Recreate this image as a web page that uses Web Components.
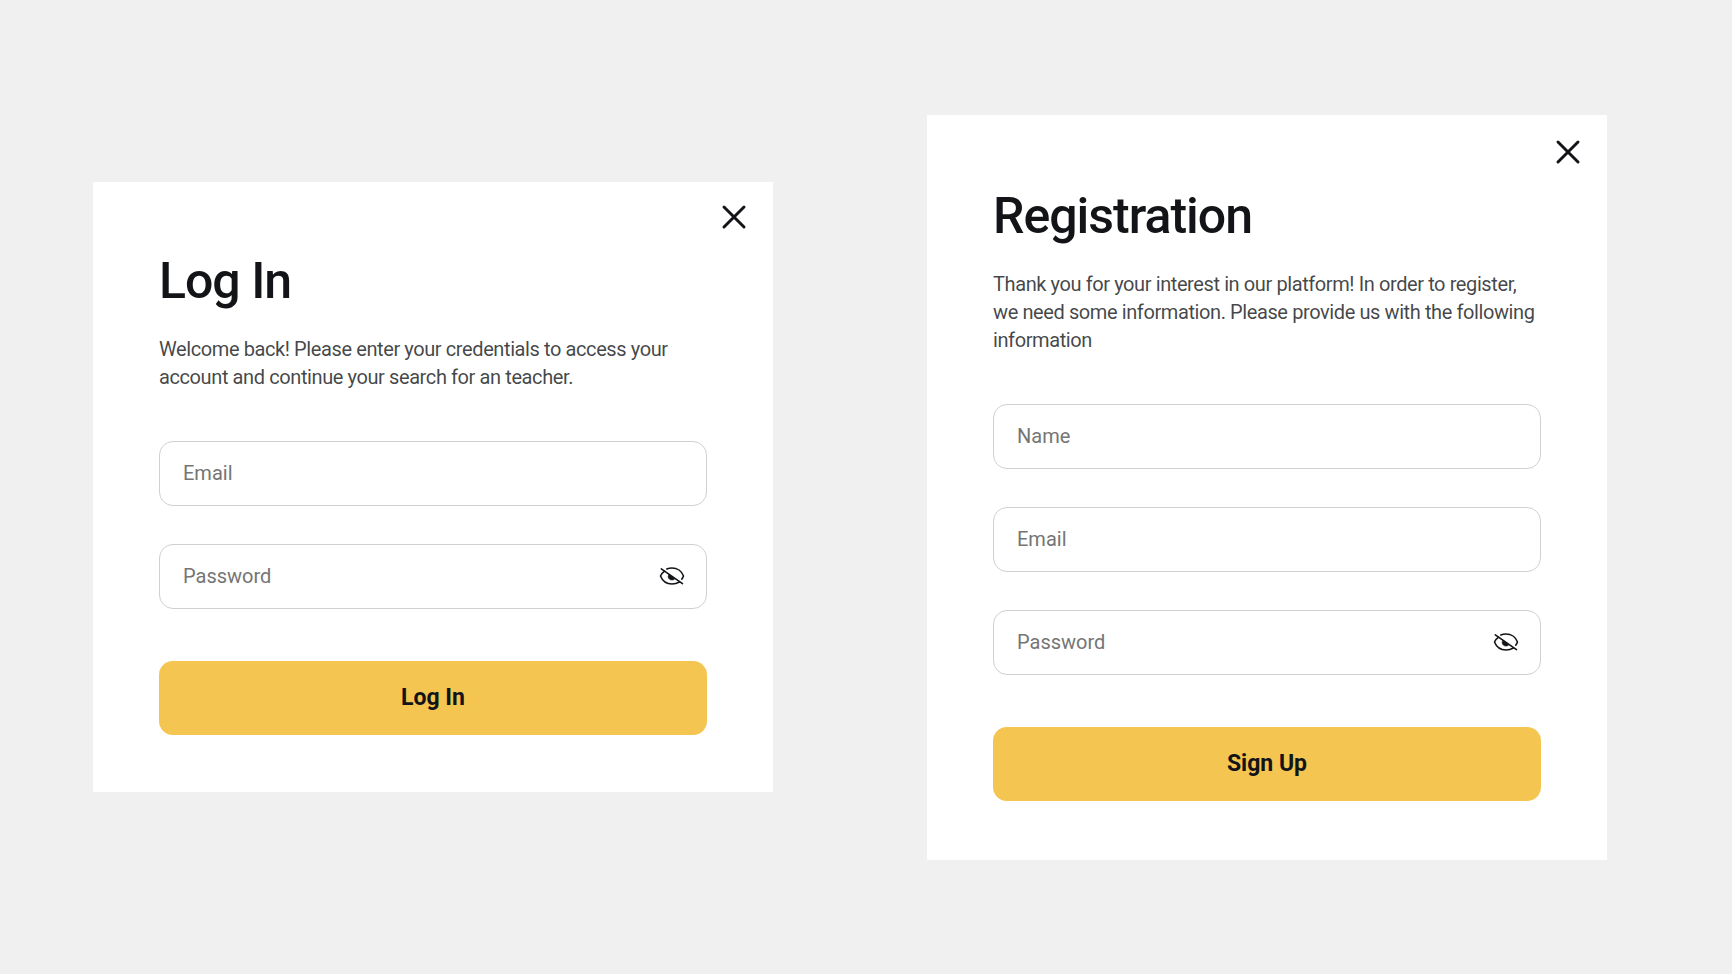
<!DOCTYPE html>
<html lang="en">
<head>
<meta charset="utf-8">
<title>Log In and Registration</title>
<style>
html,body{margin:0;min-height:100%}
body{background:#f0f0f0;font-family:Roboto,sans-serif;color:#121417}
</style>
</head>
<body>
<auth-board>
  <auth-dialog heading="Log In" action="Log In">
    <span slot="intro">Welcome back! Please enter your credentials to access your account and continue your search for an teacher.</span>
    <text-field label="Email" type="email"></text-field>
    <text-field label="Password" type="password"></text-field>
  </auth-dialog>
  <auth-dialog heading="Registration" action="Sign Up" class="tall">
    <span slot="intro">Thank you for your interest in our platform! In order to register, we need some information. Please provide us with the following information</span>
    <text-field label="Name" type="text"></text-field>
    <text-field label="Email" type="email"></text-field>
    <text-field label="Password" type="password"></text-field>
  </auth-dialog>
</auth-board>
<script>
customElements.define('auth-board', class extends HTMLElement {
  constructor() {
    super();
    this.attachShadow({mode: 'open'}).innerHTML = `
      <style>
        :host{display:block}
        main{box-sizing:border-box;min-height:100vh;display:grid;grid-template-columns:repeat(auto-fit,minmax(min(100%,600px),1fr));gap:154px;padding:48px 125px 48px 93px;align-items:center}
      </style>
      <main><slot></slot></main>`;
  }
});
customElements.define('text-field', class extends HTMLElement {
  constructor() {
    super();
    this.attachShadow({mode: 'open'});
  }
  connectedCallback() {
    const label = this.getAttribute('label');
    const type = this.getAttribute('type');
    this.shadowRoot.innerHTML = `
      <style>
        :host{display:block}
        .box{box-sizing:border-box;height:65px;display:flex;align-items:center;border:1px solid #d0d0d1;border-radius:14px;padding:0 21px 1px 23px;background:#fff}
        input{flex:1;min-width:0;border:0;outline:0;padding:0;background:none;font:400 20px/28px Roboto,sans-serif;color:#121417}
        input::placeholder{color:#757575;opacity:1}
        button{border:0;padding:0;background:none;display:flex;cursor:pointer}
      </style>
      <div class="box">
        <input type="${type}" placeholder="${label}" aria-label="${label}">
        ${type === 'password' ? `<button type="button" aria-label="Show password">
          <svg width="26" height="26" viewBox="0 0 26 26" fill="none" stroke="#121417" stroke-width="1.6" stroke-linecap="round" stroke-linejoin="round"><path d="M5.600 8.200C3.600 9.600 2.200 11.400 1.500 13c1.900 4.900 6.400 8 11.500 8 2.700 0 5.200-.7 7.400-2"/><path d="M7.800 6C9.400 5.300 11.200 5 13 5c5.100 0 9.700 3.200 11.500 8-.4 1.200-.9 2.200-1.700 3.100"/><path d="M2.300 5.900l21.200 14.700"/><path d="M9.700 11.500l6.200 4.300c-.7.800-1.800 1.300-2.900 1.300a3.600 3.600 0 0 1-3.300-5.600z" fill="#121417" stroke-width=".5"/></svg>
        </button>` : ''}
      </div>`;
  }
});
customElements.define('auth-dialog', class extends HTMLElement {
  constructor() {
    super();
    this.attachShadow({mode: 'open'});
  }
  connectedCallback() {
    this.shadowRoot.innerHTML = `
      <style>
        :host{display:block}
        section{background:#fff;padding:18px 66px 57px;display:flex;flex-direction:column}
        :host(.tall) section{padding-bottom:59px;padding-top:20px}
        .close{align-self:flex-end;margin-right:-44px;border:0;padding:0;background:none;display:flex;cursor:pointer}
        h2{margin:17px 0 24px;font:500 50px/60px Roboto,sans-serif;letter-spacing:-.02em}
        p{margin:0;font-size:20px;line-height:28px;color:rgba(18,20,23,.8);letter-spacing:-.02em}
        form{display:flex;flex-direction:column}
        .fields{display:grid;gap:38px;margin:50px 0 52px}
        .submit{height:74px;border:0;border-radius:14px;background:#f4c550;color:#121417;font:700 23px/30px Roboto,sans-serif;cursor:pointer}
      </style>
      <section>
        <button class="close" type="button" aria-label="Close">
          <svg width="34" height="34" viewBox="0 0 34 34" fill="none" stroke="#121417" stroke-width="3" stroke-linecap="round"><path d="M7 7l20 20M27 7L7 27"/></svg>
        </button>
        <h2>${this.getAttribute('heading')}</h2>
        <p><slot name="intro"></slot></p>
        <form>
          <div class="fields"><slot></slot></div>
          <button class="submit" type="button">${this.getAttribute('action')}</button>
        </form>
      </section>`;
  }
});
</script>
</body>
</html>
